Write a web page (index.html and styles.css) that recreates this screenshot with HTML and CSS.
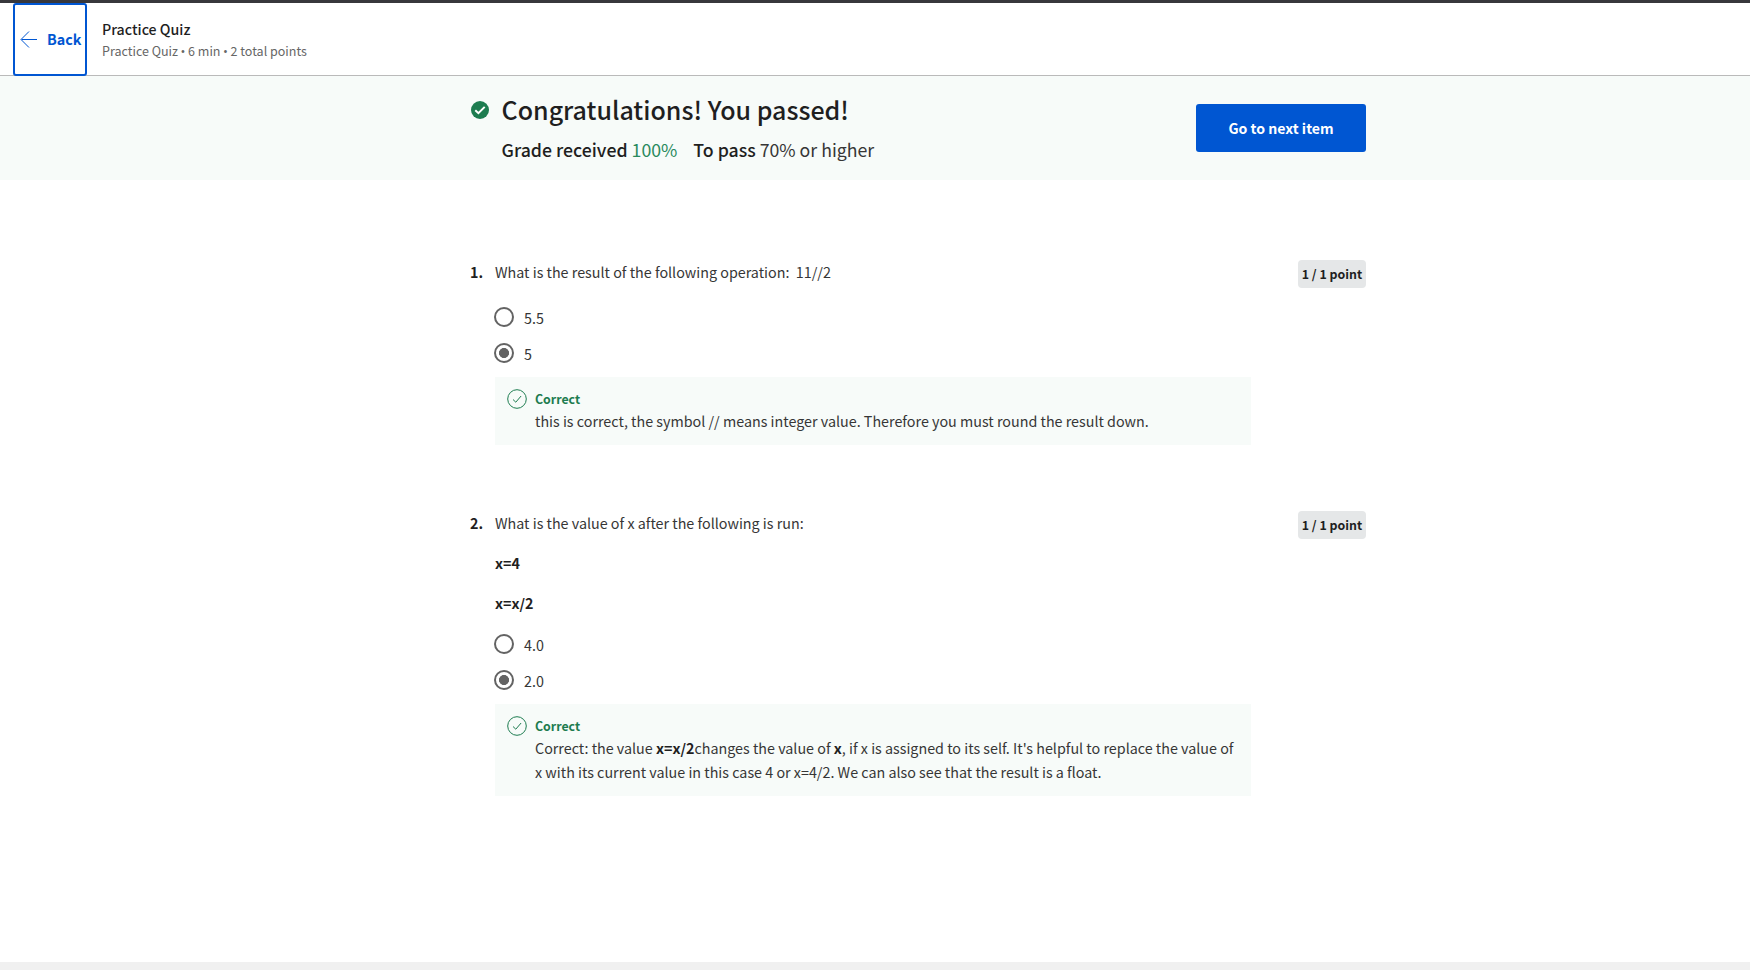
FILE: index.html
```html
<!DOCTYPE html>
<html lang="en">
<head>
<meta charset="utf-8">
<title>Practice Quiz</title>
<link rel="stylesheet" href="styles.css">
</head>
<body>
<div class="page">
  <header class="topbar">
    <button class="back">
      <svg class="back-icon" width="18" height="18" viewBox="0 0 18 18" fill="none" stroke="#0056d2"><path d="M17 9.5H1.5M9 1.5L1 9.5l8 8"/></svg>
      <span>Back</span>
    </button>
    <div class="heading">
      <div class="heading-title">Practice Quiz</div>
      <div class="heading-meta">Practice Quiz<span class="dot">•</span>6 min<span class="dot">•</span>2 total points</div>
    </div>
  </header>

  <section class="banner">
    <div class="banner-inner">
      <svg class="passed-icon" width="18" height="18" viewBox="0 0 18 18"><circle cx="9" cy="9" r="9" fill="#1d7c50"/><path d="M4.3 9.3l3.1 2.9 6.3-6.3" fill="none" stroke="#fff" stroke-width="2"/></svg>
      <div class="result">
        <h1 class="result-title">Congratulations! You passed!</h1>
        <div class="grades">
          <span><b class="label">Grade received</b> <span class="score">100%</span></span>
          <span><b class="label">To pass</b> 70% or higher</span>
        </div>
      </div>
      <button class="next">Go to next item</button>
    </div>
  </section>

  <main class="questions">
    <article class="question">
      <div class="number">1.</div>
      <div class="body">
        <p class="prompt">What is the result of the following operation:&nbsp; 11//2</p>
        <div class="options">
          <label class="option"><span class="radio"></span><span class="option-text">5.5</span></label>
          <label class="option"><span class="radio checked"></span><span class="option-text">5</span></label>
        </div>
        <div class="feedback">
          <svg class="ok-icon" width="20" height="20" viewBox="0 0 20 20" fill="none" stroke="#1d7c50"><circle cx="10" cy="10" r="9.3"/><path d="M6 10.5l2.8 2.7 5.3-6.2"/></svg>
          <div>
            <div class="verdict">Correct</div>
            <p class="explain">this is correct, the symbol // means integer value. Therefore you must round the result down.</p>
          </div>
        </div>
      </div>
      <div class="points">1 / 1 point</div>
    </article>

    <article class="question">
      <div class="number">2.</div>
      <div class="body">
        <p class="prompt">What is the value of x after the following is run:</p>
        <p class="prompt code">x=4</p>
        <p class="prompt code">x=x/2</p>
        <div class="options after-code">
          <label class="option"><span class="radio"></span><span class="option-text">4.0</span></label>
          <label class="option"><span class="radio checked"></span><span class="option-text">2.0</span></label>
        </div>
        <div class="feedback">
          <svg class="ok-icon" width="20" height="20" viewBox="0 0 20 20" fill="none" stroke="#1d7c50"><circle cx="10" cy="10" r="9.3"/><path d="M6 10.5l2.8 2.7 5.3-6.2"/></svg>
          <div>
            <div class="verdict">Correct</div>
            <p class="explain">Correct: the value <b>x=x/2</b>changes the value of <b>x</b>, if x is assigned to its self. It's helpful to replace the value of<br>x with its current value in this case 4 or x=4/2. We can also see that the result is a float.</p>
          </div>
        </div>
      </div>
      <div class="points">1 / 1 point</div>
    </article>
  </main>
  <footer class="footer"></footer>
</div>
</body>
</html>
```
FILE: styles.css
```css
* { box-sizing: border-box; }
body {
  margin: 0;
  background: #fff;
  color: #1f1f1f;
  font-family: "Noto Sans CJK SC", "Noto Sans", sans-serif;
  font-size: 14.32px;
  line-height: 24px;
}
p, h1 { margin: 0; }
b { color: #1f1f1f; }
button { font: inherit; margin: 0; }
.page {
  display: flex;
  flex-direction: column;
  height: 970px;
  overflow: hidden;
}
.topbar {
  display: flex;
  height: 76px;
  padding-left: 13px;
  border-top: 3px solid #38383c;
  border-bottom: 1px solid #bababa;
}
.back {
  display: flex;
  align-items: center;
  gap: 9px;
  width: 74px;
  height: 73px;
  padding: 0 0 2px 5px;
  background: #fff;
  border: 2px solid #0056d2;
  border-radius: 3px;
  color: #0056d2;
  font-weight: 700;
}
.heading { padding: 15px 0 0 15px; }
.heading-title { font-size: 14.2px; font-weight: 500; line-height: 22px; }
.heading-meta { font-size: 12.53px; line-height: 22px; color: #666; }
.dot { font-family: "Open Sans", sans-serif; font-size: 13px; padding: 0 2.6px; }
.banner { height: 104px; background: #f7fbf9; }
.banner-inner {
  display: flex;
  width: 896px;
  margin-left: 470px;
}
.passed-icon { margin: 25px 12.5px 0 1px; }
.result { flex: 1; padding-top: 15px; }
.result-title { font-size: 25px; font-weight: 500; line-height: 36px; }
.grades {
  display: flex;
  gap: 16px;
  margin-top: 9px;
  font-size: 17.72px;
  line-height: 26px;
  color: #363636;
}
.label { font-weight: 500; }
.score { color: #2a8a5e; }
.next {
  width: 170px;
  height: 48px;
  margin-top: 28px;
  padding: 0;
  background: #0056d2;
  border: 0;
  border-radius: 3px;
  color: #fff;
  font-size: 14.1px;
  font-weight: 700;
}
.questions {
  flex: 1;
  display: flex;
  flex-direction: column;
  gap: 66px;
  width: 896px;
  margin-left: 470px;
  padding-top: 80px;
}
.question { display: flex; align-items: flex-start; }
.number { width: 25px; font-weight: 700; }
.body { width: 756px; color: #363636; }
.code { margin-top: 16px; color: #1f1f1f; font-weight: 700; }
.options {
  display: flex;
  flex-direction: column;
  gap: 16px;
  margin: 23px 0 14px -1px;
}
.after-code { margin-top: 19px; }
.option { display: flex; align-items: center; gap: 10px; height: 20px; }
.option-text { padding-top: 2px; }
.radio {
  width: 20px;
  height: 20px;
  border: 2px solid #636363;
  border-radius: 50%;
}
.checked { background: radial-gradient(circle, #636363 4.7px, #fff 5.3px); }
.feedback {
  display: flex;
  gap: 8px;
  padding: 12px;
  background: #f7fbf9;
}
.ok-icon { flex: none; }
.verdict { font-size: 12.35px; font-weight: 700; line-height: 20px; color: #1d7c50; }
.explain { white-space: nowrap; }
.points {
  width: 68px;
  height: 28px;
  margin-left: auto;
  background: #e5e7e8;
  border-radius: 4px;
  font-size: 12.4px;
  font-weight: 700;
  line-height: 28px;
  text-align: center;
}
.footer { height: 8px; background: #f0f0f0; }
```
